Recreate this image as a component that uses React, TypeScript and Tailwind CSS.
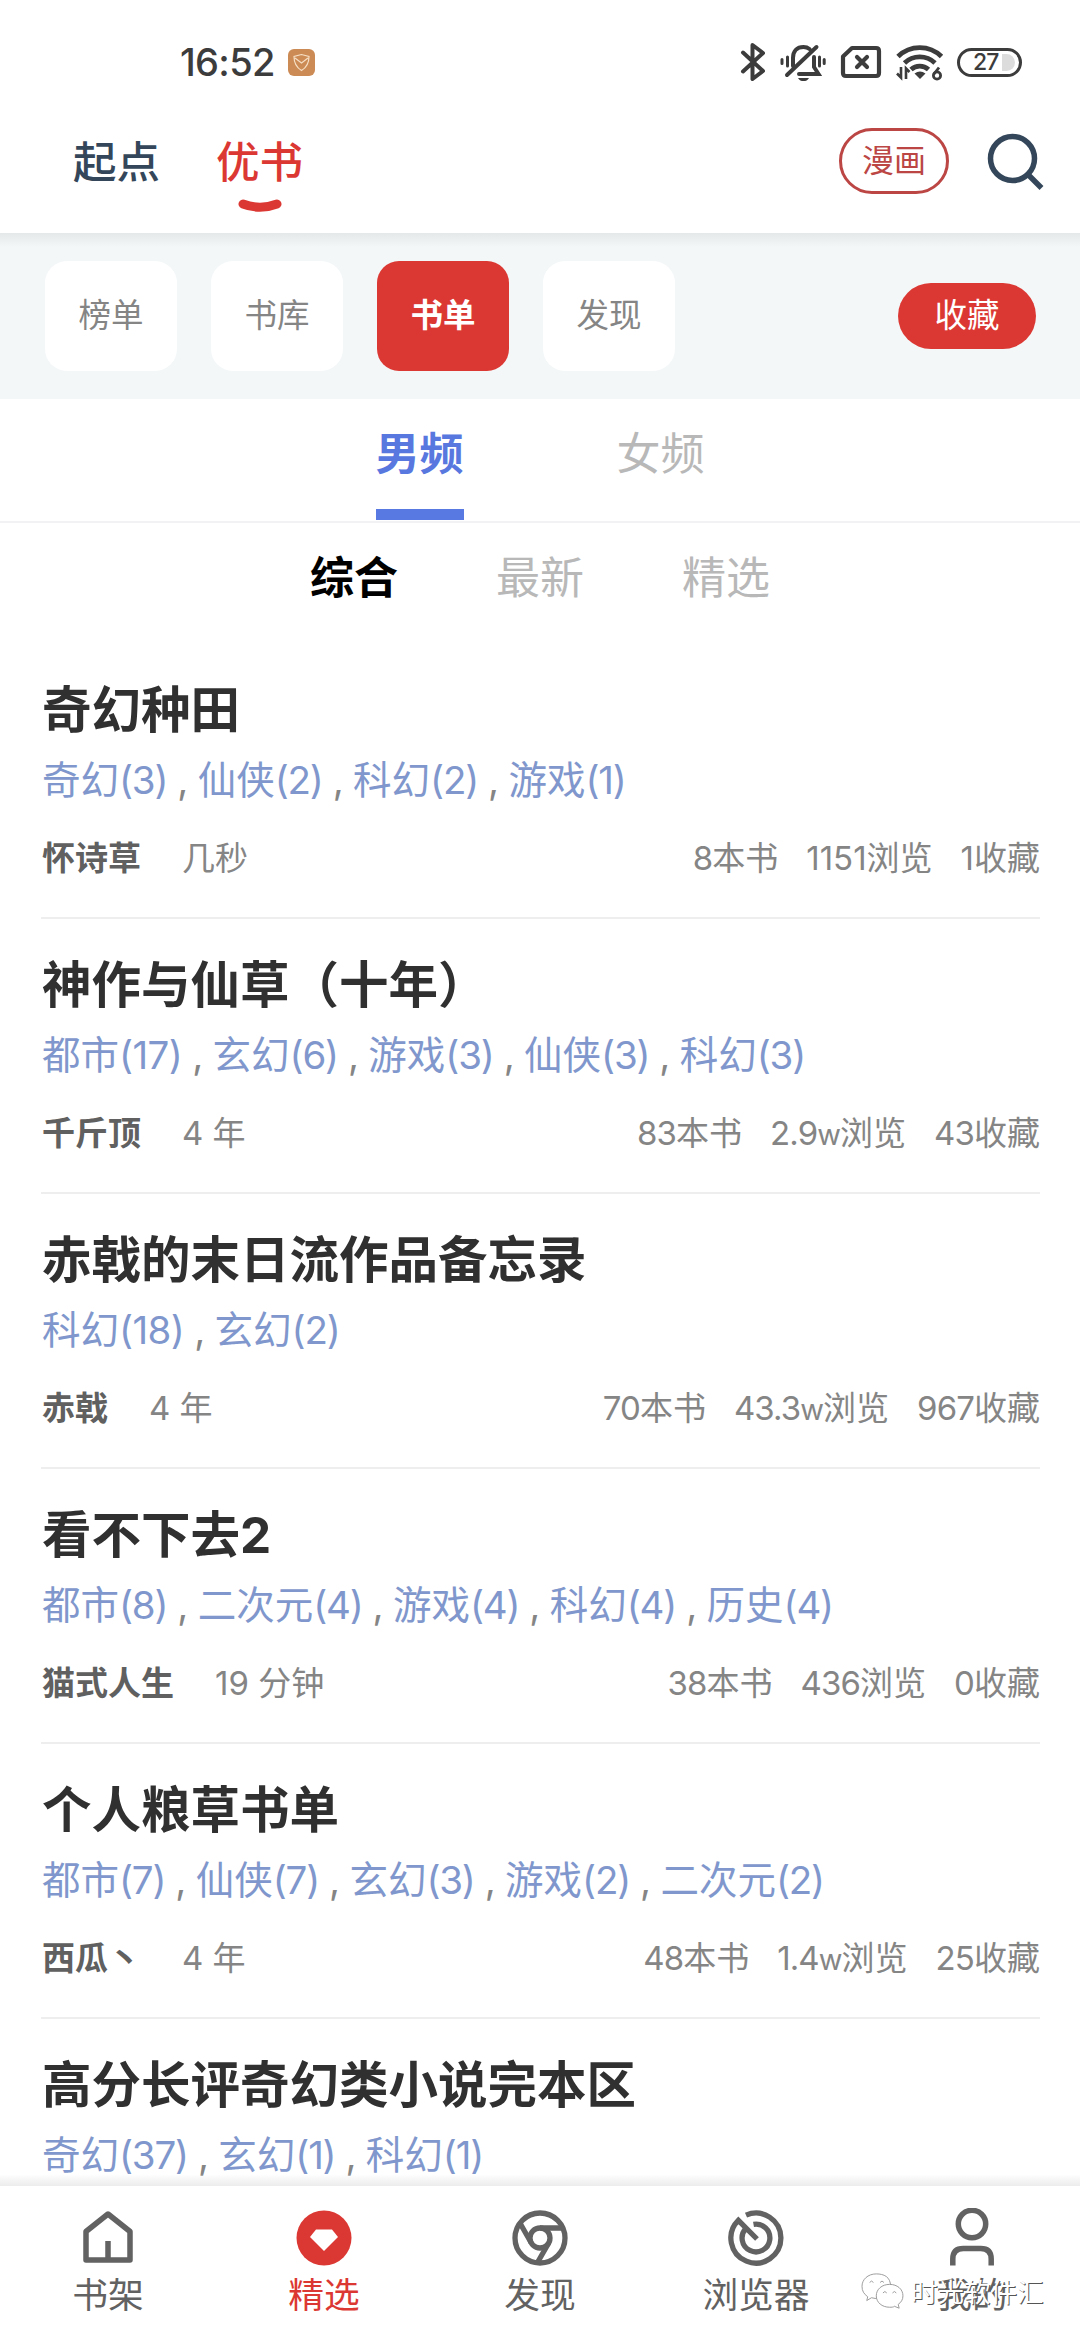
import React from "react";

type Book = { title: string; tags: [string, number][]; author: string; time: string; stats: [string, string][] };

const lists: Book[] = [
  { title: "奇幻种田", tags: [["奇幻", 3], ["仙侠", 2], ["科幻", 2], ["游戏", 1]], author: "怀诗草", time: "几秒", stats: [["8", "本书"], ["1151", "浏览"], ["1", "收藏"]] },
  { title: "神作与仙草（十年）", tags: [["都市", 17], ["玄幻", 6], ["游戏", 3], ["仙侠", 3], ["科幻", 3]], author: "千斤顶", time: "4 年", stats: [["83", "本书"], ["2.9w", "浏览"], ["43", "收藏"]] },
  { title: "赤戟的末日流作品备忘录", tags: [["科幻", 18], ["玄幻", 2]], author: "赤戟", time: "4 年", stats: [["70", "本书"], ["43.3w", "浏览"], ["967", "收藏"]] },
  { title: "看不下去2", tags: [["都市", 8], ["二次元", 4], ["游戏", 4], ["科幻", 4], ["历史", 4]], author: "猫式人生", time: "19 分钟", stats: [["38", "本书"], ["436", "浏览"], ["0", "收藏"]] },
  { title: "个人粮草书单", tags: [["都市", 7], ["仙侠", 7], ["玄幻", 3], ["游戏", 2], ["二次元", 2]], author: "西瓜丶", time: "4 年", stats: [["48", "本书"], ["1.4w", "浏览"], ["25", "收藏"]] },
  { title: "高分长评奇幻类小说完本区", tags: [["奇幻", 37], ["玄幻", 1], ["科幻", 1]], author: "", time: "", stats: [] },
];

function StatusBar() {
  return (
    <div className="flex h-[124px] items-center justify-between pl-[180px] pr-[58px] text-[#3c3c3c]">
      <div className="flex items-center gap-[13px]">
        <span className="text-[38px] leading-[44px] font-medium tracking-[-0.7px]">16:52</span>
        <svg width="27" height="27" viewBox="0 0 27 27" fill="none">
          <rect width="27" height="27" rx="6" fill="#cc8b55" />
          <path d="M13.5 5.5 6 7.5c0 6 2.500 11 7.500 14 5-3 7.500-8 7.500-14zM7 9l6.500 5L20 9" stroke="#f6dfc4" strokeWidth="1.200" />
        </svg>
      </div>
      <div className="flex items-center">
        <svg width="26" height="40" viewBox="0 0 26 40" fill="none" stroke="currentColor" strokeWidth="4" strokeLinecap="round" strokeLinejoin="round">
          <path d="M3 10.500 23 29 12.500 37V3L23 11 3 29.500" />
        </svg>
        <svg className="ml-[14px]" width="46" height="40" viewBox="0 0 46 40" fill="none" stroke="currentColor" strokeWidth="4" strokeLinecap="round">
          <path d="M13 24V16c0-7 4-11 10.500-11 2.500 0 4.500.8 6 2M34 15v10l4.500 7H19M36.500 5 7 33" />
          <path d="M7.500 15v9M2 17.500v4M39.500 15v9M44.200 17.500v4" strokeWidth="3" />
          <path d="M18 36h11c-1.500 2.500-3 3-5.500 3s-4-.5-5.500-3z" fill="currentColor" stroke="none" />
        </svg>
        <svg className="ml-[14px]" width="42" height="34" viewBox="0 0 42 34" fill="none" stroke="currentColor" strokeWidth="4.200" strokeLinejoin="round" strokeLinecap="round">
          <path d="M3 11.500 12 3h24q3 0 3 3v22q0 3-3 3H6q-3 0-3-3z" />
          <path d="m17 12 10 10M27 12 17 22" />
        </svg>
        <svg className="ml-[14px]" width="48" height="38" viewBox="0 0 48 38" fill="none" stroke="currentColor" strokeWidth="4.800">
          <path d="M2 13.500a31 31 0 0 1 43.500 0M8.500 20a22 22 0 0 1 30.500 0M15 26.500a13 13 0 0 1 17.500 0" />
          <path d="m18.500 30.500 5.500 5.500 5.500-5.500q-5.500-4-11 0z" fill="currentColor" stroke="none" />
          <path d="M5 24v10.500L1 30.500M10 36V25.500l3.500 3.500" strokeWidth="2.600" />
          <circle cx="41" cy="32.500" r="3.600" strokeWidth="2.800" />
          <path d="M43 24.500 38 31" strokeWidth="2.800" />
        </svg>
        <div className="ml-[13px] flex h-[29px] w-[65px] items-center rounded-full border-[3px] border-[#3c3c3c] pl-[13px]">
          <span className="text-[23px] leading-[24px] font-medium tracking-[-1px]">27</span>
          <span className="ml-[4px] h-[17px] w-[13px] rounded-r-full bg-[#dcdcdc]" />
        </div>
      </div>
    </div>
  );
}

function Header() {
  return (
    <div className="flex h-[109px] items-start justify-between pl-[73px] pr-[35px]">
      <div className="flex gap-[56px] text-[43.500px] leading-[60px] font-medium">
        <span className="mt-[8px] text-[#34475a]">起点</span>
        <div className="mt-[8px] flex flex-col items-center text-[#dc3833]">
          <span>优书</span>
          <svg className="mt-[6px]" width="46" height="18" viewBox="0 0 46 18" fill="none">
            <path d="M6 6Q23 12.500 40 6" stroke="#dc3833" strokeWidth="9" strokeLinecap="round" />
          </svg>
        </div>
      </div>
      <div className="mt-[4px] flex items-center">
        <div className="flex h-[66px] w-[110px] items-center justify-center rounded-full border-[3px] border-[#bb4644] text-[32px] text-[#bb4644]">漫画</div>
        <svg className="ml-[38px]" width="58" height="58" viewBox="0 0 58 58" fill="none" stroke="#34475a" strokeWidth="5.500">
          <circle cx="25.500" cy="26.500" r="22" />
          <path d="m41 42.500 13.500 13.500" />
        </svg>
      </div>
    </div>
  );
}

function Chips() {
  return (
    <div className="relative flex h-[166px] items-center justify-between bg-[#f3f7f8] pl-[45px] pr-[44px] text-[32.500px]">
      <div className="absolute inset-x-0 top-0 h-[14px] bg-gradient-to-b from-[#e4e8e8] to-[#f3f7f8]" />
      <div className="flex gap-[34px] text-[#858585]">
        {["榜单", "书库", "书单", "发现"].map((t) =>
          t === "书单" ? (
            <div key={t} className="flex h-[110px] w-[132px] items-center justify-center rounded-[22px] bg-[#dc3833] font-bold text-white">{t}</div>
          ) : (
            <div key={t} className="flex h-[110px] w-[132px] items-center justify-center rounded-[22px] bg-white">{t}</div>
          )
        )}
      </div>
      <div className="flex h-[66px] w-[138px] items-center justify-center rounded-full bg-[#dc3833] text-white">收藏</div>
    </div>
  );
}

function Tabs() {
  return (
    <>
      <div className="flex h-[124px] justify-center gap-[153px] border-b-2 border-[#f2f2f4] text-[44px] text-[#b8b8b8]">
        <div className="flex flex-col pt-[25px] font-bold text-[#5878df]">
          <span className="leading-[60px]">男频</span>
          <span className="mt-[25px] h-[11px] w-[88px] bg-[#5878e2]" />
        </div>
        <span className="pt-[25px] leading-[60px]">女频</span>
      </div>
      <div className="flex h-[121px] justify-center gap-[98px] pt-[25px] text-[44px] leading-[60px] text-[#b8b8b8]">
        <span className="font-bold text-black">综合</span>
        <span>最新</span>
        <span>精选</span>
      </div>
    </>
  );
}

function Count({ n }: { n: string }) {
  if (n.endsWith("w"))
    return <span className="tracking-[-0.900px]">{n.slice(0, -1)}<span className="text-[29px]">w</span></span>;
  return <span className={n.startsWith("1") ? "tracking-normal" : "tracking-[-0.900px]"}>{n}</span>;
}

function Item({ b }: { b: Book }) {
  return (
    <div className="ml-[41px] mr-[40px] h-[275px] shrink-0 border-b-2 border-[#eeeeee] pt-[33px]">
      <div className="pl-px text-[49.500px] leading-[66px] font-bold text-[#303030]">{b.title}</div>
      <div className="mt-[7px] flex pl-px text-[38.500px] leading-[60px] text-[#7f97cc]">
        {b.tags.map(([n, c], i) => (
          <React.Fragment key={n}>
            {i > 0 && <span className="w-[30.400px] pl-[10px] text-[#858585]">,</span>}
            <span>{n}<span className={c > 9 && c < 20 ? "tracking-[-0.600px]" : "tracking-[-1.200px]"}>({c})</span></span>
          </React.Fragment>
        ))}
      </div>
      <div className="mt-[28px] flex h-[40px] justify-between pl-px text-[33px] leading-[40px] text-[#858585]">
        <div className="flex gap-[41px]">
          <span className="font-bold text-[#606060]">{b.author}</span>
          <span>{b.time}</span>
        </div>
        <div className="flex gap-[28px]">
          {b.stats.map(([n, unit]) => <span key={unit}><Count n={n} />{unit}</span>)}
        </div>
      </div>
    </div>
  );
}

function NavIcon({ name }: { name: string }) {
  if (name === "书架")
    return (
      <svg width="60" height="60" viewBox="0 0 60 60" fill="none" stroke="currentColor" strokeWidth="5.500" strokeLinejoin="round">
        <path d="M8 23.500 30 6 52 23.500V52H8zM30 33v18" />
      </svg>
    );
  if (name === "精选")
    return (
      <svg width="60" height="60" viewBox="0 0 60 60">
        <circle cx="30" cy="30" r="27.500" fill="#dc3833" />
        <path d="M22 21.500h16l6 7.500-14 14L16 29z" fill="#fff" />
      </svg>
    );
  if (name === "发现")
    return (
      <svg width="60" height="60" viewBox="0 0 60 60" fill="none" stroke="currentColor" strokeWidth="5.300">
        <circle cx="30" cy="30" r="25" />
        <circle cx="30" cy="30" r="10" />
        <path d="M30 20h22M21.300 35 10.500 16M38.700 35 27.500 54.500" />
      </svg>
    );
  if (name === "浏览器")
    return (
      <svg width="60" height="60" viewBox="0 0 60 60" fill="none" stroke="currentColor" strokeWidth="5.300">
        <path d="M20 7.100A25 25 0 1 1 12.300 12.300L31 31" />
        <path d="M27.500 16.300a13.900 13.900 0 1 1-7.500 4" />
      </svg>
    );
  return (
    <svg width="60" height="60" viewBox="0 0 60 60" fill="none" stroke="currentColor" strokeWidth="5.500">
      <circle cx="30" cy="16" r="13.700" />
      <path d="M10.800 57.500V51q0-10.500 10.500-10.500h17.400q10.500 0 10.500 10.500v6.500" />
    </svg>
  );
}

function BottomNav() {
  return (
    <div className="relative h-[154px] shrink-0 bg-white text-[#626262]">
      <div className="absolute inset-x-0 -top-[12px] h-[12px] bg-gradient-to-b from-transparent to-[#ececec]" />
      <div className="flex pt-[22px]">
        {["书架", "精选", "发现", "浏览器", "我的"].map((t) => (
          <div key={t} className={t === "精选" ? "flex w-[216px] flex-col items-center text-[#dc3833]" : "flex w-[216px] flex-col items-center"}>
            <NavIcon name={t} />
            <span className="mt-[3px] text-[35.750px] leading-[48px]">{t}</span>
          </div>
        ))}
      </div>
      <div className="absolute left-[859px] top-[86px] flex items-center">
        <svg width="46" height="40" viewBox="0 0 46 42" fill="#fff" stroke="#999" strokeWidth="1">
          <path d="M17 2C8 2 2 8 2 15c0 5 2 8 6 11l-1 4 5-3c10 3 20-2 20-12S25 2 17 2z" />
          <path d="M31 13c-8 0-14 5-14 12s6 12 14 12c2 0 4 0 5-1l5 2-1-4c3-2 5-5 5-9 0-7-6-12-14-12z" />
          <path d="M10 11q2-3 4 0M21 11q2-3 4 0M24 22q2-3 4 0M34 22q2-3 4 0" fill="none" />
        </svg>
        <span className="ml-[6px] text-[26.500px] leading-[40px] whitespace-nowrap text-white [text-shadow:1px_1px_0_#555]">时光软件汇</span>
      </div>
    </div>
  );
}

export default function App() {
  return (
    <div className="flex h-[2340px] w-[1080px] flex-col overflow-hidden bg-white font-['Inter','Noto_Sans_CJK_SC',sans-serif]">
      <StatusBar />
      <Header />
      <Chips />
      <Tabs />
      <div className="flex min-h-0 flex-1 flex-col overflow-hidden">
        {lists.map((b) => <Item key={b.title} b={b} />)}
      </div>
      <BottomNav />
    </div>
  );
}
